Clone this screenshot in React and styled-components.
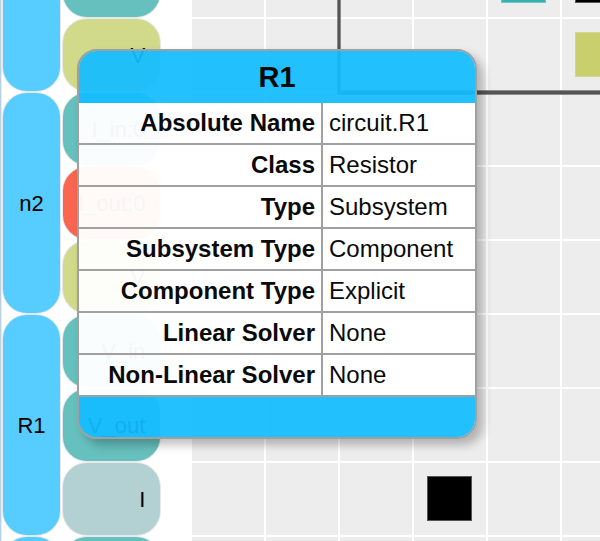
import React from "react";
import styled, { createGlobalStyle } from "styled-components";

const GlobalStyle = createGlobalStyle`
  * { box-sizing: border-box; }
  body {
    margin: 0;
    background: #ffffff;
    color: #000000;
    font-family: "Liberation Sans", Arial, Helvetica, sans-serif;
  }
`;

const Page = styled.main`
  position: relative;
  height: 100vh;
  overflow: hidden;
`;

const Diagram = styled.div`
  display: flex;
  margin-top: -55px;
`;

const Column = styled.div`
  display: grid;
  grid-auto-rows: 72px;
  row-gap: 2px;
  width: ${(p) => p.$width}px;
  margin-right: ${(p) => p.$gap}px;
  flex: none;
`;

const Node = styled.div`
  grid-row: span ${(p) => p.$rows || 1};
  display: flex;
  align-items: center;
  justify-content: ${(p) => (p.$leaf ? "flex-end" : "center")};
  padding: ${(p) => (p.$leaf ? "2px 15px 0" : "2px 0 0")};
  border-radius: 24px;
  background: ${(p) => p.$color};
  box-shadow: 0 0 0 1px #e6e8ea;
  font-size: 22px;
  line-height: 24px;
`;

const Ancestor = styled.div`
  grid-row: 1 / span 9;
  background: #b9cfe6;
  border-right: 1px solid #e9edf1;
`;

const Matrix = styled.div`
  flex: 1;
  display: grid;
  grid-template-columns: repeat(6, 72px);
  grid-auto-rows: 72px;
  gap: 2px;
`;

const Cell = styled.div`
  grid-row: ${(p) => p.$row};
  grid-column: ${(p) => p.$col};
  padding: 13px;
  background: #ededed;
`;

const Mark = styled.div`
  width: 45px;
  height: 45px;
  background: ${(p) => p.$color};
  border: 1px solid ${(p) => p.$edge};
`;

const GroupOutline = styled.div`
  grid-column: 3 / -1;
  grid-row: 1 / 3;
  margin: 0 0 -3px -2px;
  border: solid #555555;
  border-width: 0 0 3px 2px;
  box-shadow: 0 0 0 1px #8c8c8c, inset 0 0 0 1px #8c8c8c;
  z-index: 1;
`;

const Tooltip = styled.section`
  position: absolute;
  z-index: 2;
  left: 77px;
  top: 49px;
  width: 400px;
  border: 2px solid #a0a0a0;
  border-radius: 20px;
  overflow: hidden;
  box-shadow: 6px 6px 10px rgba(0, 0, 0, 0.25);
`;

const Details = styled.table`
  width: 100%;
  border-spacing: 0;
  font-size: 24px;
  line-height: 28px;
  color: #0a0a0a;
`;

const Title = styled.caption`
  height: 52px;
  background: rgba(19, 188, 255, 0.93);
  font-size: 29px;
  font-weight: bold;
  line-height: 52px;
`;

const Label = styled.th`
  width: 244px;
  height: 42px;
  padding: 0 6px 0 0;
  text-align: right;
  background: rgba(255, 255, 255, 0.96);
  border-right: 2px solid #a0a0a0;
  border-bottom: 2px solid #a0a0a0;
`;

const Value = styled.td`
  height: 42px;
  padding: 0 0 0 6px;
  background: rgba(255, 255, 255, 0.98);
  border-bottom: 2px solid #a0a0a0;
`;

const Footer = styled.footer`
  height: 40px;
  background: rgba(19, 188, 255, 0.93);
`;

const BLUE = "#57ccff";
const TEAL = "#66c0bd";
const OLIVE = "#d1da8b";
const RED = "#fa6650";
const GRAY = "#b3d1d2";

const groups = [
  { name: "", rows: 2 },
  { name: "n2", rows: 3 },
  { name: "R1", rows: 3 },
  { name: "", rows: 3 },
];

const leaves = [
  { name: "", color: TEAL },
  { name: "V", color: OLIVE },
  { name: "I_in:0", color: TEAL },
  { name: "I_out:0", color: RED },
  { name: "V", color: OLIVE },
  { name: "V_in", color: TEAL },
  { name: "V_out", color: TEAL },
  { name: "I", color: GRAY },
  { name: "", color: TEAL },
];

const marks = {
  "0-4": { color: "#35b1af", edge: "#74c5c3" },
  "0-5": { color: "#000000", edge: "#555555" },
  "1-5": { color: "#c8cf6c", edge: "#d1d78b" },
  "7-3": { color: "#000000", edge: "#555555" },
};

const details = [
  ["Absolute Name", "circuit.R1"],
  ["Class", "Resistor"],
  ["Type", "Subsystem"],
  ["Subsystem Type", "Component"],
  ["Component Type", "Explicit"],
  ["Linear Solver", "None"],
  ["Non-Linear Solver", "None"],
];

const ROWS = 9;
const COLUMNS = 6;

function MatrixGrid() {
  const cells = [];
  for (let row = 0; row < ROWS; row++) {
    for (let col = 0; col < COLUMNS; col++) {
      const mark = marks[`${row}-${col}`];
      cells.push(
        <Cell key={`${row}-${col}`} $row={row + 1} $col={col + 1}>
          {mark && <Mark $color={mark.color} $edge={mark.edge} />}
        </Cell>
      );
    }
  }
  return (
    <Matrix>
      {cells}
      <GroupOutline />
    </Matrix>
  );
}

export default function App() {
  return (
    <Page>
      <GlobalStyle />
      <Diagram>
        <Column $width={2} $gap={1}>
          <Ancestor />
        </Column>
        <Column $width={57} $gap={3}>
          {groups.map((g, i) => (
            <Node key={i} $rows={g.rows} $color={BLUE}>{g.name}</Node>
          ))}
        </Column>
        <Column $width={97} $gap={32}>
          {leaves.map((l, i) => (
            <Node key={i} $leaf $color={l.color}>{l.name}</Node>
          ))}
        </Column>
        <MatrixGrid />
      </Diagram>
      <Tooltip>
        <Details>
          <Title>R1</Title>
          <tbody>
            {details.map(([label, value]) => (
              <tr key={label}>
                <Label scope="row">{label}</Label>
                <Value>{value}</Value>
              </tr>
            ))}
          </tbody>
        </Details>
        <Footer />
      </Tooltip>
    </Page>
  );
}
